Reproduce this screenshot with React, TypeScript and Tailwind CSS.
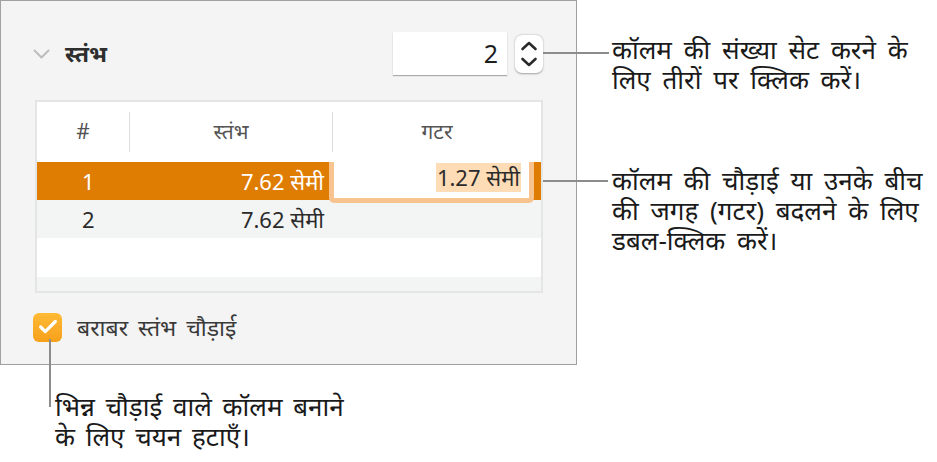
import { Check } from "lucide-react";

const FONT = "font-['Noto_Sans','Noto_Sans_Devanagari',sans-serif]";

function Stepper() {
  return (
    <div className="ml-2 flex h-[38px] w-[28px] items-center justify-center rounded-[7px] bg-white shadow-[0_0.5px_2px_rgba(0,0,0,0.35)]">
      <svg width="28" height="38" viewBox="0 0 28 38" fill="none" stroke="#2b2b2b" strokeWidth="2.6" strokeLinecap="round" strokeLinejoin="round">
        <polyline points="7.5,14 14,8 20.5,14" />
        <polyline points="7.5,24 14,30 20.5,24" />
      </svg>
    </div>
  );
}

function ColumnTable() {
  return (
    <div className="ml-[34px] mt-[25px] w-[508px] border-2 border-[#e5e5e5] bg-white text-[21px]">
      {/* header */}
      <div className="flex h-[60px] items-center text-[#555]">
        <div className="flex w-[93px] justify-center border-r border-[#dcdcdc] py-[4px]">#</div>
        <div className="flex w-[203px] justify-center border-r border-[#dcdcdc] py-[4px]">स्तंभ</div>
        <div className="flex flex-1 justify-center py-[4px]">गटर</div>
      </div>
      {/* row 1, selected */}
      <div className="flex h-[38px] items-center bg-[#df7c02] text-[22px] text-white">
        <div className="w-[93px] pl-[45px]">1</div>
        <div className="w-[194px] text-right">7.62 सेमी</div>
        <div className="ml-[5px] flex h-[41px] w-[205px] self-start rounded-b-[5px] bg-[#f7c38f] px-[5px] pb-[5px]">
          <div className="flex flex-1 items-start justify-end bg-white pr-[8px] pt-px text-[#2b2b2b]">
            <span className="bg-[#fddcb6] px-[1px] leading-[29px]">1.27 सेमी</span>
          </div>
        </div>
      </div>
      {/* row 2 */}
      <div className="flex h-[38px] items-center bg-[#f3f4f4] text-[22px] text-[#2b2b2b]">
        <div className="w-[93px] pl-[45px]">2</div>
        <div className="w-[194px] text-right">7.62 सेमी</div>
      </div>
      <div className="h-[39px] bg-white" />
      <div className="h-[14px] bg-[#f3f4f4]" />
    </div>
  );
}

function Panel() {
  return (
    <div className="h-[365px] w-[577px] border border-[#a0a0a0] bg-[#f4f4f4]">
      <div className="flex items-center pl-[32px] pr-[33px] pt-[31px]">
        <svg width="17" height="10" viewBox="0 0 17 10" fill="none" stroke="#bdbdbd" strokeWidth="2" strokeLinecap="round" strokeLinejoin="round">
          <polyline points="1.5,1.5 8.5,8.5 15.5,1.5" />
        </svg>
        <div className="ml-[15px] text-[23px] font-bold text-[#2e2e2e]">स्तंभ</div>
        <div className="flex-1" />
        <div className="flex h-[43px] w-[114px] items-center justify-end bg-white pr-[9px] text-[25px] text-[#1e1e1e] shadow-[0_1px_1px_rgba(0,0,0,0.3)]">
          2
        </div>
        <Stepper />
      </div>
      <ColumnTable />
      <div className="ml-[32px] mt-[17px] flex items-center">
        <div className="flex h-[29px] w-[29px] items-center justify-center rounded-[6px] bg-gradient-to-b from-[#ffba35] to-[#f6a01a]">
          <Check className="h-[22px] w-[22px] text-white" strokeWidth={3.5} />
        </div>
        <div className="ml-[15px] text-[23px] text-[#3a3a3a] [word-spacing:4px]">बराबर स्तंभ चौड़ाई</div>
      </div>
    </div>
  );
}

export default function App() {
  return (
    <div className={`relative h-[462px] w-[937px] overflow-hidden bg-white ${FONT}`}>
      <div className="flex">
        <div className="flex flex-col">
          <Panel />
          <div className="ml-[55px] mt-[26px] text-[26px] leading-[30px] text-[#1a1a1a] [word-spacing:4px]">
            भिन्न चौड़ाई वाले कॉलम बनाने
            <br />
            के लिए चयन हटाएँ।
          </div>
        </div>
        <div className="ml-[35px] flex flex-col text-[26px] leading-[30px] text-[#1a1a1a] [word-spacing:5px]">
          <div className="mt-[34px]">
            कॉलम की संख्या सेट करने के
            <br />
            लिए तीरों पर क्लिक करें।
          </div>
          <div className="mt-[71px]">
            कॉलम की चौड़ाई या उनके बीच
            <br />
            की जगह (गटर) बदलने के लिए
            <br />
            डबल-क्लिक करें।
          </div>
        </div>
      </div>

      {/* callout leader lines */}
      <div className="absolute left-[543px] top-[52px] h-[2px] w-[66px] bg-[#8c8c8c]" />
      <div className="absolute left-[543px] top-[180px] h-[2px] w-[65px] bg-[#8c8c8c]" />
      <div className="absolute left-[49px] top-[339px] h-[68px] w-[2px] bg-[#8c8c8c]" />
    </div>
  );
}
